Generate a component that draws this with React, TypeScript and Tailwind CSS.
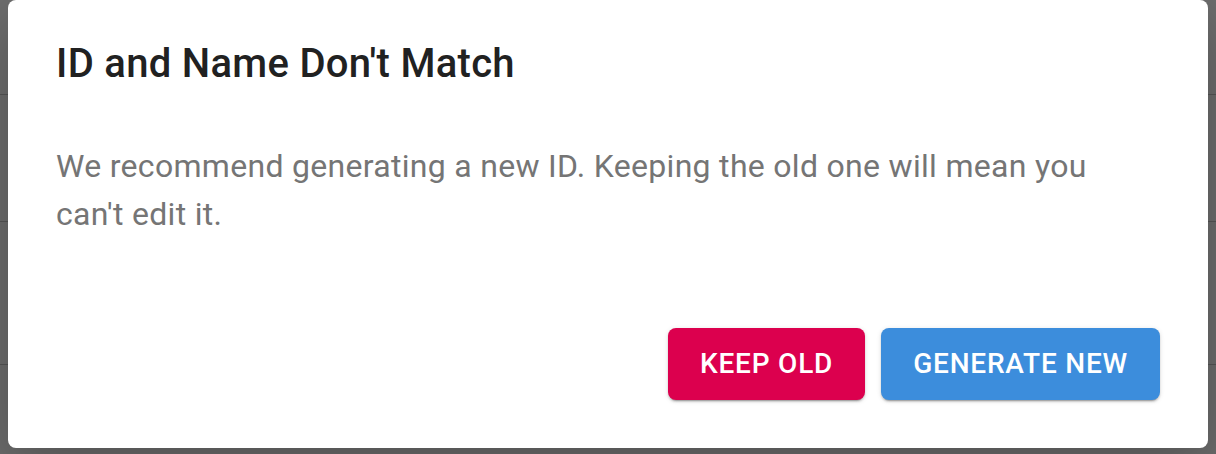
const rows = ["h-[95px]", "h-[127px]", "h-[143px]"];

export default function App() {
  return (
    <div
      className="relative h-[454px] w-[1216px] overflow-hidden bg-[#6f6f6f]"
      style={{ fontFamily: "Roboto, 'Liberation Sans', sans-serif" }}
    >
      {/* page behind the backdrop */}
      <div className="flex flex-col">
        {rows.map((h, i) => (
          <div key={i} className={`${h} border-b border-[#575757]`} />
        ))}
      </div>

      {/* dialog */}
      <div className="absolute left-2 top-0 flex h-[448px] w-[1200px] flex-col rounded-lg bg-white shadow-[0_22px_70px_8px_rgba(0,0,0,0.25)]">
        <h2 className="px-12 pt-8 text-[40px] font-medium leading-[64px] tracking-[0.0075em] text-[#212121]">
          ID and Name Don't Match
        </h2>
        <p className="mt-[46px] px-12 text-[32px] leading-[48px] tracking-[0.00938em] text-[#757575]">
          We recommend generating a new ID. Keeping the old one will mean you
          <br />
          can't edit it.
        </p>
        <div className="mt-auto flex justify-end gap-4 px-12 pb-12">
          <button className="h-[72px] rounded-lg bg-[#dc004e] px-8 text-[28px] font-medium uppercase tracking-[0.02857em] text-white shadow-[0_3px_1px_-2px_rgba(0,0,0,0.2),0_2px_2px_0_rgba(0,0,0,0.14),0_1px_5px_0_rgba(0,0,0,0.12)]">
            Keep Old
          </button>
          <button className="h-[72px] rounded-lg bg-[#3c8ddc] px-8 text-[28px] font-medium uppercase tracking-[0.02857em] text-white shadow-[0_3px_1px_-2px_rgba(0,0,0,0.2),0_2px_2px_0_rgba(0,0,0,0.14),0_1px_5px_0_rgba(0,0,0,0.12)]">
            Generate New
          </button>
        </div>
      </div>
    </div>
  );
}
